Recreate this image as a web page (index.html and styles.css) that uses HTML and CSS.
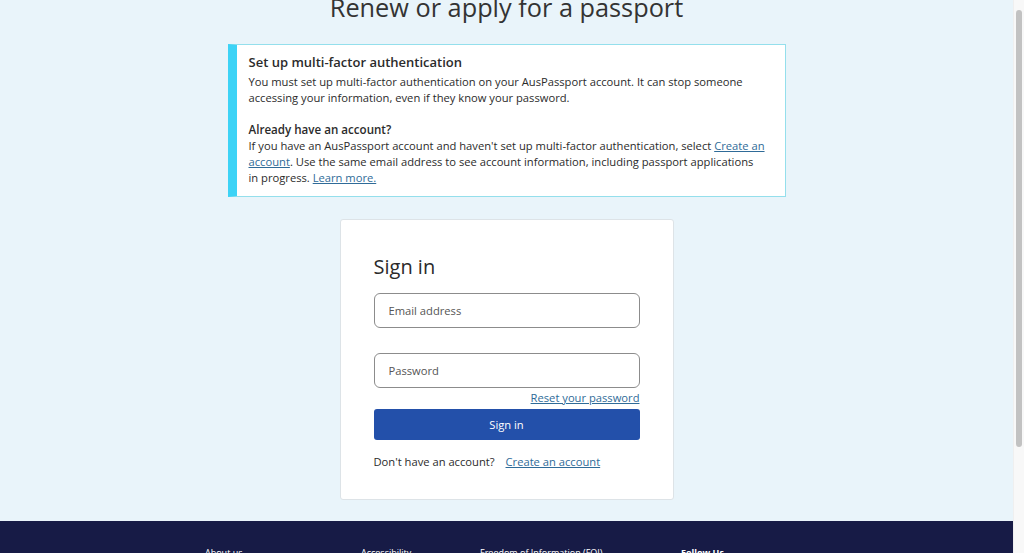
FILE: index.html
```html
<!DOCTYPE html>
<html lang="en">
<head>
    <meta charset="UTF-8">
    <meta name="viewport" content="width=device-width, initial-scale=1.0">
    <title>Sign in - AusPassport</title>
    <link rel="stylesheet" href="styles.css">
</head>
<body>
    <div class="window">
        <div class="page">
            <main class="content">
                <h1>Renew or apply for a passport</h1>

                <!-- MFA notice -->
                <div class="notice">
                    <h2>Set up multi-factor authentication</h2>
                    <p>You must set up multi-factor authentication on your AusPassport account. It can stop someone accessing your information, even if they know your password.</p>
                    <h2 class="gap">Already have an account?</h2>
                    <p>If you have an AusPassport account and haven't set up multi-factor authentication, select <a href="#">Create an account</a>. Use the same email address to see account information, including passport applications<br>in progress. <a href="#">Learn more.</a></p>
                </div>

                <!-- Sign in card -->
                <div class="card">
                    <h3>Sign in</h3>
                    <form class="signin" onsubmit="return false">
                        <input type="email" placeholder="Email address">
                        <input type="password" placeholder="Password" class="pw">
                        <a href="#" class="reset">Reset your password</a>
                        <button type="submit">Sign in</button>
                    </form>
                    <p class="register">Don't have an account? <a href="#">Create an account</a></p>
                </div>
            </main>

            <footer class="footer">
                <div class="footer-cols">
                    <span class="col-about">About us</span>
                    <span class="col-access">Accessibility</span>
                    <span class="col-foi">Freedom of Information (FOI)</span>
                    <span class="col-follow">Follow Us</span>
                </div>
            </footer>
        </div>

        <!-- scrollbar -->
        <div class="scrollbar"><div class="thumb"></div></div>
    </div>
</body>
</html>
```

FILE: styles.css
```css
html, body {
    margin: 0;
    height: 100%;
    overflow: hidden;
}
body {
    font-family: "Open Sans", "Liberation Sans", sans-serif;
    color: #2b2b2b;
    background-color: #e9f4fa;
}
.window {
    display: flex;
    height: 553px;
}
.page {
    flex: 1;
    display: flex;
    flex-direction: column;
    background-color: #e9f4fa;
}
.content {
    flex-shrink: 0;
    display: flex;
    flex-direction: column;
    align-items: center;
    height: 521px;
}
h1 {
    font-size: 25.3px;
    font-weight: 400;
    color: #333;
    margin: -11px 0 10px;
    line-height: 36px;
    height: 45px;
}
a {
    color: #2f6b98;
}
.notice {
    box-sizing: border-box;
    width: 558px;
    height: 153px;
    background-color: white;
    border: 1px solid #94dfec;
    border-left: 9px solid #3dd3f6;
    padding: 7px 18px 0 12px;
    font-size: 11.2px;
    line-height: 16px;
}
.notice h2 {
    font-size: 13px;
    font-weight: 600;
    margin: 0 0 2px;
    line-height: 20px;
}
.notice h2.gap {
    margin: 16px 0 0;
    font-size: 11.6px;
    line-height: 16px;
}
.notice p {
    margin: 0;
}
.card {
    box-sizing: border-box;
    width: 334px;
    height: 281px;
    margin-top: 22px;
    background-color: white;
    border: 1px solid #dde3e7;
    border-radius: 3px;
    padding: 32px 33px 0;
}
.card h3 {
    font-size: 20px;
    font-weight: 400;
    margin: 0 0 11px;
    line-height: 30px;
    color: #2b2b2b;
}
.signin {
    display: flex;
    flex-direction: column;
}
.signin input {
    box-sizing: border-box;
    height: 35px;
    border: 1px solid #8c8c8c;
    border-radius: 6px;
    padding: 0 14px;
    font-family: inherit;
    font-size: 11.2px;
    margin: 0;
}
.signin input::placeholder {
    color: #555;
}
.signin .pw {
    margin-top: 25px;
}
.reset {
    align-self: flex-end;
    font-size: 11.2px;
    line-height: 18px;
    margin-top: 1px;
}
.signin button {
    height: 31px;
    margin-top: 2px;
    background-color: #2350aa;
    color: white;
    border: none;
    border-radius: 3px;
    font-family: inherit;
    font-size: 11.2px;
    cursor: pointer;
}
.register {
    font-size: 11.2px;
    margin: 13px 0 0;
    line-height: 18px;
}
.register a {
    margin-left: 8px;
}
.footer {
    flex: 1;
    background-color: #171b46;
    color: white;
    font-size: 9px;
}
.footer-cols {
    display: flex;
    padding: 25px 0 0 205px;
}
.col-about { width: 156px; }
.col-access { width: 119px; }
.col-foi { width: 201px; }
.col-follow { font-weight: 700; }
.scrollbar {
    width: 10px;
    background-color: #f8f8f8;
    border-left: 1px solid #efefef;
    position: relative;
}
.thumb {
    position: absolute;
    top: 10px;
    left: 2px;
    width: 6px;
    height: 437px;
    border-radius: 3px;
    background-color: #c2c2c2;
}
```
